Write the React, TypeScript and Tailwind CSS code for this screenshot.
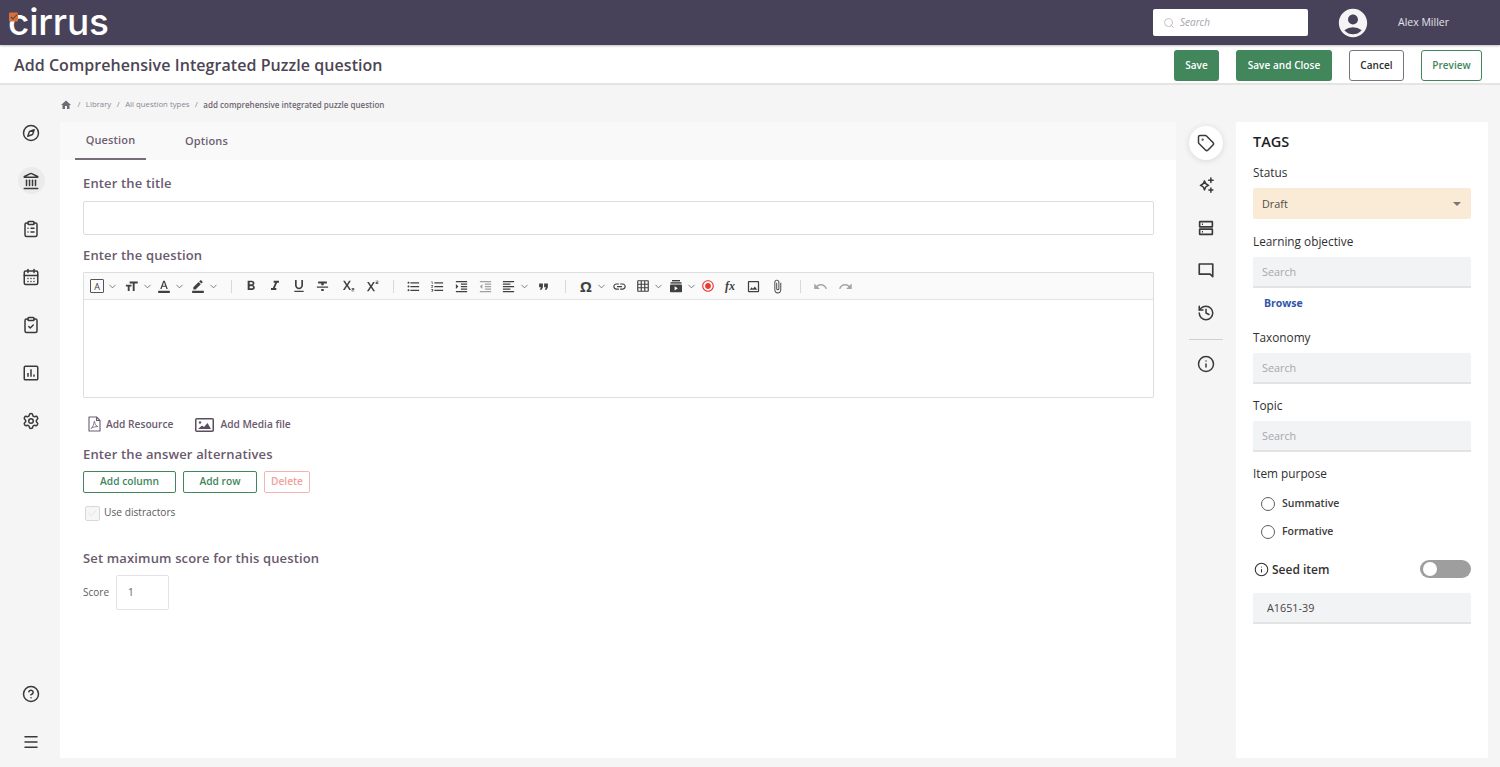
import React from "react";
import { Compass, Landmark, ClipboardList, CalendarDays, ClipboardCheck, Settings, CircleHelp, Menu, Tag, History, Info, Search, ChevronDown, Check } from "lucide-react";
import { MdFormatBold, MdFormatItalic, MdFormatUnderlined, MdFormatStrikethrough, MdSubscript, MdSuperscript, MdFormatListBulleted, MdFormatListNumbered, MdFormatIndentIncrease, MdFormatIndentDecrease, MdFormatAlignLeft, MdFormatQuote, MdLink, MdOutlineImage, MdAttachFile, MdUndo, MdRedo, MdFormatSize, MdFormatColorText, MdBorderColor, MdGridOn, MdAccountCircle, MdHome, MdRadioButtonChecked } from "react-icons/md";

const font = { fontFamily: '"Open Sans", "Noto Sans", sans-serif' };

function Chev() {
  return <ChevronDown size={11} strokeWidth={1.6} className="text-[#555] ml-[3px]" />;
}

function Sep() {
  return <div className="w-px h-[13px] bg-[#d9d9d9]" />;
}

function ChartBox({ size = 18, className = "" }: { size?: number; strokeWidth?: number; className?: string }) {
  return (
    <svg width={size} height={size} viewBox="0 0 24 24" fill="none" stroke="currentColor" strokeWidth="2" className={className}>
      <rect x="3" y="3" width="18" height="18" rx="1.5" />
      <path d="M8 17v-5M12 17V7M16 17v-3" />
    </svg>
  );
}

function SparkleIcon({ className = "" }: { className?: string }) {
  return (
    <svg width="18" height="18" viewBox="0 0 24 24" fill="none" stroke="currentColor" strokeWidth="2" strokeLinejoin="round" className={className}>
      <path d="M10 6.5c.7 3.8 2 5.1 5.5 6-3.5.9-4.8 2.2-5.5 6-.7-3.8-2-5.1-5.5-6 3.5-.9 4.8-2.2 5.5-6z" />
      <path d="M18.5 2.5v6M15.5 5.5h6M18.5 16v5.5M15.8 18.8h5.4" strokeLinecap="round" />
    </svg>
  );
}

function RowsIcon({ className = "" }: { className?: string }) {
  return (
    <svg width="18" height="18" viewBox="0 0 24 24" fill="none" stroke="currentColor" strokeWidth="2.2" className={className}>
      <rect x="3.5" y="3.5" width="17" height="7" rx="0.5" />
      <rect x="3.5" y="13.5" width="17" height="7" rx="0.5" />
      <path d="M6.5 7h1.5M6.5 17h1.5" />
    </svg>
  );
}

function CommentIcon({ className = "" }: { className?: string }) {
  return (
    <svg width="18" height="18" viewBox="0 0 24 24" fill="none" stroke="currentColor" strokeWidth="2.2" strokeLinejoin="round" className={className}>
      <path d="M3 4h18v17l-3.5-3.5H3z" />
    </svg>
  );
}

function PdfIcon({ className = "" }: { className?: string }) {
  return (
    <svg width="13" height="16" viewBox="0 0 13 16" fill="none" stroke="currentColor" strokeWidth="1.1" strokeLinejoin="round" className={className}>
      <path d="M1 1h7.5L12 4.5V15H1z" />
      <path d="M8.5 1v3.5H12" />
      <path d="M3 12.5c1.5-1 3-4 3-6.5 0-1 .8-1 .8 0 0 2 1.2 4 3.2 4.6-2.5-.2-5 .5-7 1.9z" strokeWidth="0.8" />
    </svg>
  );
}

function MediaIcon({ className = "" }: { className?: string }) {
  return (
    <svg width="19" height="14" viewBox="0 0 19 14" className={className}>
      <rect x="0.75" y="0.75" width="17.5" height="12.5" rx="1" fill="none" stroke="currentColor" strokeWidth="1.5" />
      <circle cx="5" cy="4.5" r="1.2" fill="currentColor" />
      <path d="M3 11l4-3.5 2 1.5 3.5-4L16 11z" fill="currentColor" />
    </svg>
  );
}

function EmbedIcon({ className = "" }: { className?: string }) {
  return (
    <svg width="14" height="14" viewBox="0 0 14 14" className={className}>
      <rect x="3" y="1" width="8" height="1.4" fill="currentColor" />
      <rect x="1.5" y="3.2" width="11" height="1.4" fill="currentColor" />
      <rect x="1" y="5.4" width="12" height="7.8" rx="0.8" fill="currentColor" />
      <path d="M5.6 7.2l3.2 2.1-3.2 2.1z" fill="#fafafa" />
    </svg>
  );
}

function LogoMark() {
  return (
    <svg width="10" height="10" viewBox="0 0 10 10" className="absolute left-[1px] top-[12px]">
      <rect x="0" y="0.5" width="9" height="9" rx="1" fill="#d9703a" />
      <path d="M2 5l2 2 4-4.5" fill="none" stroke="#47425a" strokeWidth="1.1" />
    </svg>
  );
}

const rail: any[] = [Compass, Landmark, ClipboardList, CalendarDays, ClipboardCheck, ChartBox, Settings];

function TInput({ text = "Search", dark = false }: { text?: string; dark?: boolean }) {
  return (
    <div className={`h-[31px] pt-[2px] bg-[#f2f3f5] border-b-2 border-[#e3e3e3] rounded-t-[2px] flex items-center text-[10.8px] ${dark ? "pl-[14px] text-[#444]" : "pl-[9px] text-[#a8a8a8]"}`}>
      {text}
    </div>
  );
}

function Label({ children, mt }: { children: React.ReactNode; mt: string }) {
  return <div className={`text-[11.8px] leading-[16px] font-medium text-[#2f2f2f] ${mt}`}>{children}</div>;
}

function Heading({ children, className = "" }: { children: React.ReactNode; className?: string }) {
  return <div className={`text-[13px] leading-[18px] font-semibold text-[#6a5a6e] tracking-[0.15px] ${className}`}>{children}</div>;
}

export default function App() {
  return (
    <div style={font} className="w-[1500px] h-[767px] overflow-hidden bg-[#f5f5f5] flex flex-col">
      <header className="h-[45px] bg-[#47425a] flex items-center shrink-0 relative z-10 shadow-[0_1px_2px_rgba(0,0,0,0.25)]">
        <div className="relative ml-[8px] w-[110px] h-[45px] flex items-center">
          <span style={{ fontFamily: "Inter, sans-serif" }} className="text-white text-[37px] leading-[45px] font-medium tracking-[-0.2px] -mt-[3px]">cirrus</span>
          <LogoMark />
        </div>
        <div className="ml-auto w-[155px] h-[27px] bg-white rounded-[2px] flex items-center pl-[10px] mr-[28px]">
          <Search size={12} className="text-[#c9bcc9]" strokeWidth={2} />
          <span className="ml-[5px] text-[10px] italic text-[#a9a2ab]">Search</span>
        </div>
        <MdAccountCircle size={34} className="text-[#f4f4f4] shrink-0" />
        <span className="ml-[28px] mr-[51px] mt-[1px] text-[10.5px] text-[#e4e2e8] whitespace-nowrap">Alex Miller</span>
      </header>

      <div className="h-[40px] pt-[2px] bg-white border-b-2 border-[#e4e4e4] flex items-center shrink-0 pl-[14px] pr-[18px]">
        <h1 className="text-[16px] font-semibold text-[#4d4554] tracking-[0.06px]">Add Comprehensive Integrated Puzzle question</h1>
        <div className="ml-auto flex items-center text-[10px] font-semibold tracking-[0.05px]">
          <button className="w-[45px] h-[31px] rounded-[3px] bg-[#42865c] text-white">Save</button>
          <button className="w-[96px] h-[31px] ml-[17px] rounded-[3px] bg-[#42865c] text-white">Save and Close</button>
          <button className="w-[55px] h-[31px] ml-[17px] rounded-[3px] bg-white border-[1.5px] border-[#77737f] text-[#2c2c2c]">Cancel</button>
          <button className="w-[61px] h-[31px] ml-[17px] rounded-[3px] bg-white border-[1.5px] border-[#42865c] text-[#42865c]">Preview</button>
        </div>
      </div>

      <div className="flex-1 flex min-h-0">
        <aside className="w-[60px] shrink-0 flex flex-col items-center pt-[34px] pb-[12px] pl-[2px]">
          {rail.map((I, i) => (
            <div key={i} className={`w-[27px] h-[27px] mb-[21px] rounded-full flex items-center justify-center ${i === 1 ? "bg-[#ebebeb]" : ""}`}>
              <I size={18} strokeWidth={2} className="text-[#3a3a3a]" />
            </div>
          ))}
          <div className="mt-auto w-[27px] h-[27px] mb-[21px] flex items-center justify-center">
            <CircleHelp size={18} strokeWidth={2} className="text-[#3a3a3a]" />
          </div>
          <div className="w-[27px] h-[27px] flex items-center justify-center">
            <Menu size={18} strokeWidth={2} className="text-[#3a3a3a]" />
          </div>
        </aside>

        <div className="flex-1 min-w-0 flex flex-col pb-[9px]">
          <nav className="h-[37px] pt-[2px] shrink-0 flex items-center text-[7.8px] text-[#8b8590]">
            <MdHome size={12} className="text-[#6f6a74]" />
            <span className="mx-[5.5px]">/</span>
            <span>Library</span>
            <span className="mx-[5.5px]">/</span>
            <span>All question types</span>
            <span className="mx-[5.5px]">/</span>
            <span className="text-[8px] font-semibold text-[#6e6672]">add comprehensive integrated puzzle question</span>
          </nav>
          <div className="flex flex-1 min-h-0">
            <main className="w-[1116px] shrink-0 bg-white flex flex-col">
              <div className="h-[38px] bg-[#f9f9f9] flex pl-[15px] text-[11px] font-semibold text-[#6e6072] tracking-[0.15px]">
                <div className="w-[71px] h-[38px] flex items-center justify-center border-b-2 border-[#7a6a7e]">Question</div>
                <div className="ml-[25px] w-[71px] h-[38px] flex items-center justify-center">Options</div>
              </div>
              <div className="px-[23px] flex flex-col">
                <Heading className="mt-[14px]">Enter the title</Heading>
                <div className="mt-[9px] h-[34px] w-[1071px] border border-[#dcdcdc] rounded-[2px]" />
                <Heading className="mt-[11px]">Enter the question</Heading>
                <div className="mt-[8px] w-[1071px] h-[126px] border border-[#dedede] rounded-[1px] flex flex-col">
                  <div className="h-[27px] bg-[#fafafa] border-b border-[#e4e4e4] flex items-center pl-[6px] text-[#404040] shrink-0">
                    <span className="w-[14px] h-[14px] border border-[#555] rounded-[1px] flex items-center justify-center text-[9px] leading-none">A</span><Chev />
                    <MdFormatSize size={15} className="ml-[6px]" /><Chev />
                    <MdFormatColorText size={14} className="ml-[4px]" /><Chev />
                    <MdBorderColor size={14} className="ml-[6px]" /><Chev />
                    <div className="ml-[12px]"><Sep /></div>
                    <MdFormatBold size={16} className="ml-[11px]" />
                    <MdFormatItalic size={16} className="ml-[8px]" />
                    <MdFormatUnderlined size={16} className="ml-[8px]" />
                    <MdFormatStrikethrough size={15} className="ml-[8px]" />
                    <MdSubscript size={16} className="ml-[9px]" />
                    <MdSuperscript size={16} className="ml-[8px]" />
                    <div className="ml-[14px]"><Sep /></div>
                    <MdFormatListBulleted size={15} className="ml-[12px]" />
                    <MdFormatListNumbered size={15} className="ml-[9px]" />
                    <MdFormatIndentIncrease size={15} className="ml-[9px]" />
                    <MdFormatIndentDecrease size={15} className="ml-[9px] text-[#a0a0a0]" />
                    <MdFormatAlignLeft size={15} className="ml-[8px]" /><Chev />
                    <MdFormatQuote size={15} className="ml-[6px]" />
                    <div className="ml-[14px]"><Sep /></div>
                    <span className="ml-[14px] w-[13px] text-[15px] font-bold leading-none">Ω</span><Chev />
                    <MdLink size={15} className="ml-[5px]" />
                    <MdGridOn size={14} className="ml-[9px]" /><Chev />
                    <EmbedIcon className="ml-[5px]" /><Chev />
                    <MdRadioButtonChecked size={14} className="ml-[4px] text-[#ea3b32]" />
                    <span style={{ fontFamily: '"Liberation Serif", serif' }} className="ml-[10px] w-[13px] text-[12px] font-bold italic leading-none">fx</span>
                    <MdOutlineImage size={15} className="ml-[8px]" />
                    <MdAttachFile size={15} className="ml-[9px]" />
                    <div className="ml-[15px]"><Sep /></div>
                    <MdUndo size={15} className="ml-[12px] text-[#a5a5a5]" />
                    <MdRedo size={15} className="ml-[10px] text-[#a5a5a5]" />
                  </div>
                </div>
                <div className="mt-[18px] ml-[5px] flex items-center h-[18px] text-[10.2px] font-semibold text-[#6a5a6e]">
                  <PdfIcon className="text-[#6a5a6e] -mt-[2px]" />
                  <span className="ml-[5px]">Add Resource</span>
                  <MediaIcon className="ml-[22px] text-[#5a4f5e] -mt-[1px]" />
                  <span className="ml-[6px]">Add Media file</span>
                </div>
                <Heading className="mt-[11px]">Enter the answer alternatives</Heading>
                <div className="mt-[8px] flex text-[10.2px] font-semibold">
                  <button className="w-[93px] h-[22px] border-[1.5px] border-[#42865c] rounded-[2px] text-[#42865c]">Add column</button>
                  <button className="ml-[7px] w-[74px] h-[22px] border-[1.5px] border-[#42865c] rounded-[2px] text-[#42865c]">Add row</button>
                  <button className="ml-[7px] w-[46px] h-[22px] border-[1.5px] border-[#f2b6b2] rounded-[2px] text-[#efa09b]">Delete</button>
                </div>
                <div className="mt-[12px] ml-[2px] flex items-center h-[16px] text-[10.2px] text-[#5a5a5a]">
                  <div className="w-[15px] h-[15px] border border-[#d8d8d8] rounded-[2px] bg-[#f6f6f6] flex items-center justify-center">
                    <Check size={11} className="text-[#e0e0e0]" />
                  </div>
                  <span className="ml-[4px]">Use distractors</span>
                </div>
                <Heading className="mt-[28px]">Set maximum score for this question</Heading>
                <div className="mt-[8px] flex items-center text-[10px] text-[#5c5c5c]">
                  <span>Score</span>
                  <div className="ml-[7px] w-[53px] h-[35px] border border-[#e2e2e8] rounded-[2px] flex items-center pl-[11px]">1</div>
                </div>
              </div>
            </main>

            <div className="w-[60px] shrink-0 flex flex-col items-center text-[#3a3a3a]">
              <div className="mt-[4px] w-[34px] h-[34px] rounded-full bg-white shadow-[0_1px_6px_rgba(0,0,0,0.12)] flex items-center justify-center">
                <Tag size={18} strokeWidth={2} />
              </div>
              <SparkleIcon className="mt-[16px]" />
              <RowsIcon className="mt-[25px]" />
              <CommentIcon className="mt-[24px]" />
              <History size={18} strokeWidth={2} className="mt-[25px]" />
              <div className="mt-[17px] w-[34px] h-px bg-[#d0d0d0]" />
              <Info size={18} strokeWidth={2} className="mt-[15px]" />
            </div>

            <section className="w-[252px] shrink-0 bg-white rounded-[2px] px-[17px]">
              <div className="mt-[10px] text-[14.5px] leading-[20px] font-semibold text-[#1f1f1f]">TAGS</div>
              <Label mt="mt-[12px]">Status</Label>
              <div className="mt-[8px] h-[31px] pt-[1px] bg-[#faebd7] rounded-[2px] flex items-center pl-[9px] pr-[10px] text-[10.8px] text-[#4e4a46]">
                Draft
                <div className="ml-auto w-0 h-0 border-l-[4px] border-r-[4px] border-t-[4px] border-l-transparent border-r-transparent border-t-[#777]" />
              </div>
              <Label mt="mt-[14px]">Learning objective</Label>
              <div className="mt-[8px]"><TInput /></div>
              <div className="mt-[8px] ml-[11px] text-[10.5px] leading-[14px] font-bold text-[#2f55a8]">Browse</div>
              <Label mt="mt-[19px]">Taxonomy</Label>
              <div className="mt-[8px]"><TInput /></div>
              <Label mt="mt-[13px]">Topic</Label>
              <div className="mt-[8px]"><TInput /></div>
              <Label mt="mt-[13px]">Item purpose</Label>
              <div className="mt-[15px] ml-[8px] flex items-center h-[16px] text-[10.5px] font-semibold text-[#3c3c3c]">
                <div className="w-[14px] h-[14px] rounded-full border-[1.5px] border-[#5e5e5e]" />
                <span className="ml-[7px]">Summative</span>
              </div>
              <div className="mt-[12px] ml-[8px] flex items-center h-[16px] text-[10.5px] font-semibold text-[#3c3c3c]">
                <div className="w-[14px] h-[14px] rounded-full border-[1.5px] border-[#5e5e5e]" />
                <span className="ml-[7px]">Formative</span>
              </div>
              <div className="mt-[20px] flex items-center h-[18px]">
                <Info size={15} strokeWidth={1.7} className="ml-[1px] text-[#2f2f2f]" />
                <span className="ml-[3px] mt-[1px] text-[12px] font-semibold text-[#333]">Seed item</span>
                <div className="ml-auto w-[51px] h-[18px] rounded-full bg-[#9e9e9e] flex items-center pl-[3px]">
                  <div className="w-[14px] h-[14px] rounded-full bg-white" />
                </div>
              </div>
              <div className="mt-[15px]"><TInput text="A1651-39" dark /></div>
            </section>
          </div>
        </div>
        <div className="w-[12px] shrink-0" />
      </div>
    </div>
  );
}
